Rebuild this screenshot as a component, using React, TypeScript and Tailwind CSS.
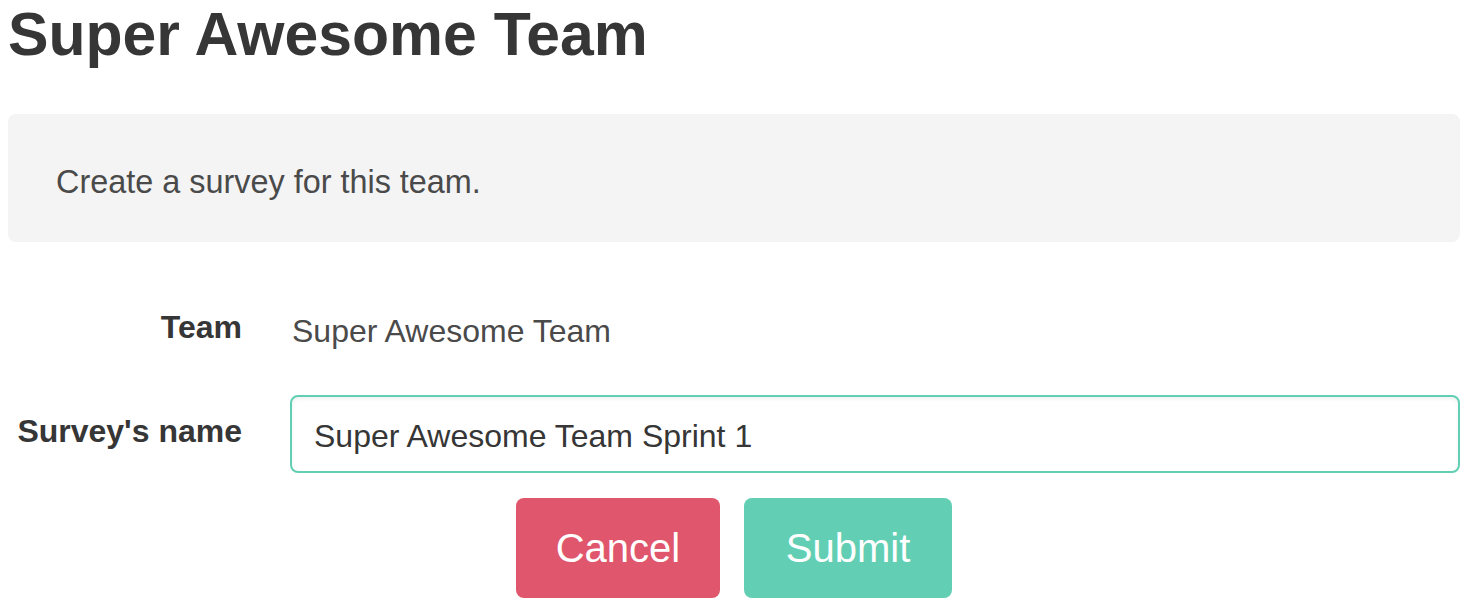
import React from "react";

export default function App() {
  return (
    <div
      className="w-[1476px] h-[612px] bg-white pl-[8px] pr-[16px] overflow-hidden"
      style={{ fontFamily: '"Liberation Sans", Arial, sans-serif' }}
    >
      <h1 className="text-[60.7px] leading-[68px] font-bold text-[#363636] mb-[46px] whitespace-nowrap">
        Super Awesome Team
      </h1>

      <div className="h-[128px] rounded-[8px] bg-[#f4f4f4] pl-[48px] pr-[80px] pt-[44px] pb-[36px] text-[32.4px] leading-[48px] text-[#4a4a4a]">
        Create a survey for this team.
      </div>

      <div className="mt-[61px] flex">
        <div className="w-[234px] mr-[48px] text-right text-[32px] leading-[48px] font-bold text-[#363636]">
          Team
        </div>
        <div className="flex-1 pl-[2px] pt-[4px] text-[32px] leading-[48px] text-[#4a4a4a]">
          Super Awesome Team
        </div>
      </div>

      <div className="mt-[40px] flex">
        <div className="w-[234px] mr-[48px] pt-[12px] text-right text-[32px] leading-[48px] font-bold text-[#363636] whitespace-nowrap">
          Survey's name
        </div>
        <div className="flex-1">
          <input
            readOnly
            value="Super Awesome Team Sprint 1"
            className="block w-full h-[78px] rounded-[8px] border-2 border-[#61cfb3] bg-white pl-[22px] pr-[22px] pt-[4px] text-[32px] text-[#363636] outline-none shadow-[inset_0_2px_4px_rgba(10,10,10,0.06)]"
            style={{ fontFamily: '"Liberation Sans", Arial, sans-serif' }}
          />
        </div>
      </div>

      <div className="mt-[25px] flex justify-center gap-[24px]">
        <button
          className="w-[204px] h-[100px] rounded-[8px] bg-[#e0566c] text-white text-[40px] leading-none flex items-center justify-center"
          style={{ fontFamily: '"Liberation Sans", Arial, sans-serif' }}
        >
          Cancel
        </button>
        <button
          className="w-[208px] h-[100px] rounded-[8px] bg-[#62cfb4] text-white text-[40px] leading-none flex items-center justify-center"
          style={{ fontFamily: '"Liberation Sans", Arial, sans-serif' }}
        >
          Submit
        </button>
      </div>
    </div>
  );
}
